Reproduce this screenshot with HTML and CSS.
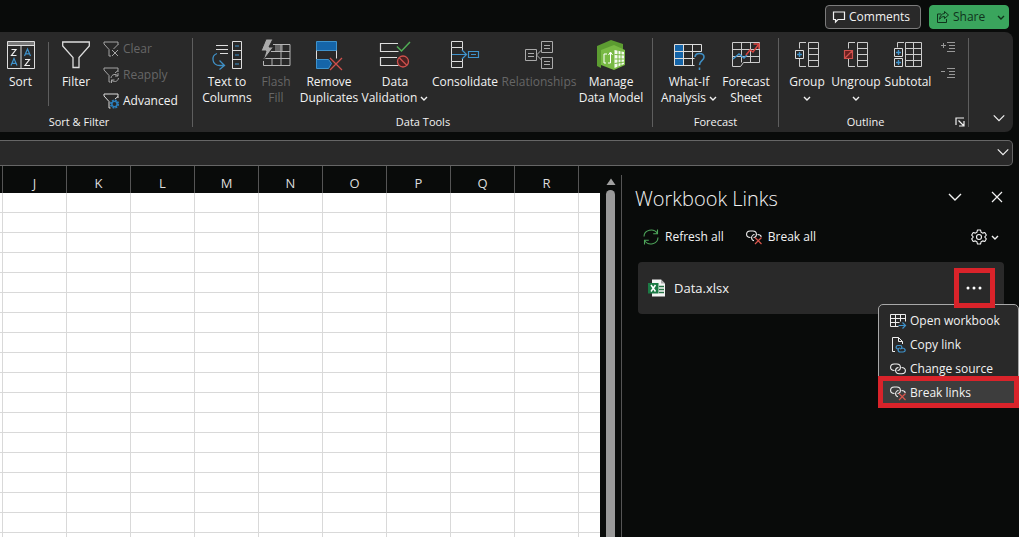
FILE: index.html
```html
<!DOCTYPE html>
<html lang="en">
<head>
<meta charset="utf-8">
<title>Workbook Links</title>
<link rel="stylesheet" href="styles.css">
</head>
<body>
<svg class="defs" aria-hidden="true">
  <symbol id="chev" viewBox="0 0 8 8"><path d="M1 3l3 3 3-3" fill="none" stroke="currentColor" stroke-width="1.4"/></symbol>
  <symbol id="chev-lg" viewBox="0 0 16 16"><path d="M2 5l6 6 6-6" fill="none" stroke="currentColor" stroke-width="1.4"/></symbol>
  <symbol id="chain" viewBox="0 0 16 16"><g fill="none" stroke="currentColor" stroke-width="1.100"><path d="M4.500 9.500C2 9.500.6 8.300.6 6.300S2.200 3 4.200 3h2.600c2.200 0 3.600 1.400 3.600 3.300S9 9.500 7.500 9.500"/><path d="M11.500 6.500c2.500 0 3.900 1.200 3.900 3.100s-1.500 3.200-3.600 3.200H9.200c-2.200 0-3.600-1.300-3.600-3.200S7 6.500 8.500 6.500"/></g></symbol>
  <symbol id="chain-x" viewBox="0 0 16 16"><g fill="none" stroke="currentColor" stroke-width="1.100"><path d="M4.500 8.500C2 8.500.6 7.300.6 5.300S2.200 2 4.200 2h2.600c2.200 0 3.600 1.400 3.600 3.300S9 8.500 7.500 8.500"/><path d="M11.500 5.500c2.200 0 3.500 1 3.800 2.300M8 11.700c-1.500-.3-2.400-1.500-2.400-3S7 5.500 8.500 5.500"/></g><path d="M9 8.500l6.500 6.500M15.500 8.500L9 15" stroke="#d8564c" stroke-width="1.200"/></symbol>
</svg>

<header class="titlebar">
  <button class="btn"><svg class="i14" viewBox="0 0 14 14"><path d="M1.500 2h11v7.500H6L3.500 12V9.500h-2z" fill="none" stroke="currentColor" stroke-width="1.200"/></svg>Comments</button>
  <button class="btn share"><svg class="i14" viewBox="0 0 14 14"><path d="M5 4H1.500v8.500h9V9M8.500 1.500l4 3.500-4 3.500V6.600C6 6.500 4.600 7.500 3.600 9.300 3.700 6 5.500 3.800 8.500 3.500z" fill="none" stroke="currentColor"/></svg>Share<svg class="i8 push"><use href="#chev"/></svg></button>
</header>

<nav class="ribbon" aria-label="Data ribbon">
  <section class="group first">
    <div class="tools">
      <button class="tool w40"><svg class="i28" viewBox="0 0 28 28"><path d="M.5.500h27v4H.5z" fill="#777"/><path d="M.5.500h27v27H.5zM.5 4.500h27M14 4.500v23" fill="none" stroke="#ddd"/><path d="M4.500 8.500h4.500l-4.500 6h5M18 18.500h4.500l-4.500 6h5" fill="none" stroke="#eee" stroke-width="1.200"/><path d="M4 24.500l3-7 3 7M5 22.300h4M17.500 15l3-7 3 7M18.500 12.800h4" fill="none" stroke="#3f93cc" stroke-width="1.200"/></svg><span>Sort</span></button>
      <i class="rule"></i>
      <button class="tool w54"><svg class="i28" viewBox="0 0 28 28"><path d="M.7 1h26.600v4L17 16.500v10h-6v-10L.7 5z" fill="none" stroke="#ddd" stroke-width="1.300"/></svg><span>Filter</span></button>
      <div class="stack filters">
        <button class="small off"><svg class="i16" viewBox="0 0 16 16"><path d="M15 4V1H1v2l5 5.500V15h2M15 3.500L10.500 8M9 9l6 6M15 9l-6 6" fill="none" stroke="#a5a5a5"/></svg>Clear</button>
        <button class="small off"><svg class="i16" viewBox="0 0 16 16"><path d="M15 5V1H1v2l5 5.500V15h1.500M15 3.500L12 6M8 11c.5-4 5-4.500 7-2M15 6v3h-3M15.500 11c-.5 4-5 4.500-7 2M8.500 16v-3h3" fill="none" stroke="#a5a5a5"/></svg>Reapply</button>
        <button class="small"><svg class="i16" viewBox="0 0 16 16"><path d="M15 5V1H1v2l5 5.500V15h1.500M15 3.500L12 6" fill="none" stroke="#ddd"/><circle cx="11.500" cy="11" r="3.600" fill="none" stroke="#2b7fbd" stroke-width="2" stroke-dasharray="1.900 .9"/><circle cx="11.500" cy="11" r="2.600" fill="none" stroke="#2b7fbd" stroke-width="1.400"/></svg>Advanced</button>
      </div>
    </div>
    <h2 class="caption shifted">Sort &amp; Filter</h2>
  </section>

  <section class="group data">
    <div class="tools">
      <button class="tool w54"><svg class="i30" viewBox="0 0 30 28"><path d="M4 4.500h12M4 8.500h12M8 12.500h8" stroke="#ddd" stroke-width="1.200"/><path d="M20.500.5h9v27h-9zM20.500 9.500h9M20.500 18.500h9" fill="none" stroke="#ddd"/><path d="M23 5h4M23 14h4M23 23h4" stroke="#3f93cc"/><path d="M5 12.500c-6 2-5.500 12 3 12h4M7.500 19.500l5 5-5 4" fill="none" stroke="#3f8fc4" stroke-width="1.300"/></svg><span>Text to<br>Columns</span></button>
      <button class="tool off w44"><svg class="i30" viewBox="0 0 30 28"><path d="M14 4h8v7h-8z" fill="#666"/><path d="M12 3.500h17v21H2.500V17M10 10.500h19M3 17.500h26M11 17.500v7M20 3.500v21" fill="none" stroke="#b5b5b5"/><path d="M5-2h7L8 6h4.500L2 20l3-10H0z" fill="#aaa" stroke="#292929"/></svg><span>Flash<br>Fill</span></button>
      <button class="tool w62"><svg class="i28" viewBox="0 0 28 28"><path d="M1.500.5h20v9h-20z" fill="#1565a9" stroke="#3f93cc"/><path d="M1.500 9.500v9M21.500 9.500v8" stroke="#ddd"/><path d="M1.500 18.500h12l3 4-3 5h-12z" fill="#1565a9" stroke="#3f93cc"/><path d="M15 17l12 12M27 17L15 29" stroke="#d0504c" stroke-width="1.300"/></svg><span>Remove<br>Duplicates</span></button>
      <button class="tool w70"><svg class="i30" viewBox="0 0 30 28"><path d="M18 2.500H.5v8h18M17 16.500H.5v8h18" fill="none" stroke="#ddd" stroke-width="1.200"/><path d="M17 5.500l4.500 4.500L30 1" fill="none" stroke="#50ad55" stroke-width="1.500"/><circle cx="23" cy="20.500" r="5.500" fill="#4a2021" stroke="#d0504c" stroke-width="1.300"/><path d="M19 16.500l8 8" stroke="#d0504c" stroke-width="1.300"/></svg><span>Data<br>Validation <svg class="i8"><use href="#chev"/></svg></span></button>
      <button class="tool w70"><svg class="i28" viewBox="0 0 28 28"><path d="M.5.500h11v6H.5zM.5 20.500h11v6H.5zM.5 6.500v14M11.500 6.500v3M11.500 17v3.500" fill="none" stroke="#ddd"/><path d="M1 13.500h14M11 9l4.500 4.500L11 18M17.500 10.500h10v6h-10zM20 13.500h5" fill="none" stroke="#3f93cc" stroke-width="1.200"/></svg><span>Consolidate</span></button>
      <button class="tool off w78"><svg class="i28" viewBox="0 0 28 28"><path d="M.5 8.500h11v11H.5zM16.500.5h11v11h-11zM16.500 16.500h11v11h-11zM3 12.500h6M3 15.500h6M19 4.500h6M19 7.500h6M19 20.500h6M19 23.500h6M16.500 9l-5 5 5 5" fill="none" stroke="#aaa"/></svg><span>Relationships</span></button>
      <button class="tool w66"><svg class="i30" viewBox="0 0 30 28"><path d="M1 5L15-1l12 4v6L15 6 5 10v17l-4-2z" fill="#5c9c31"/><path d="M5 9l13-5 11 5v15l-11 5-13-5z" fill="#78b944"/><path d="M18.500 9l9.500 2v12l-9.500 4z" fill="#f4faef"/><path d="M18.500 13.500l10 .5M18.500 18h10M18.500 22.500l10-1.500M22 9v17M25 10v15" stroke="#78b944"/><path d="M8 13h3M8 13v9h2M14.500 22V12M12.500 14l2-3 2 3M12 22h2.500" fill="none" stroke="#fff"/></svg><span>Manage<br>Data Model</span></button>
    </div>
    <h2 class="caption">Data Tools</h2>
  </section>

  <section class="group forecast">
    <div class="tools">
      <button class="tool w64"><svg class="i30" viewBox="0 0 30 28"><path d="M1 3h9v21H1z" fill="#1565a9"/><path d="M.5 3.500h27v7M.5 3.500v21h20M.5 10.500h27M.5 17.500h20M9.500 3.500v21M18.500 3.500v21" fill="none" stroke="#ddd"/><path d="M21 16c0-5 9-4.500 9 0 0 4-4.500 3.500-4.500 8M25.500 26.500v2.500" fill="none" stroke="#3f8fc4" stroke-width="1.600"/></svg><span>What-If<br>Analysis <svg class="i8"><use href="#chev"/></svg></span></button>
      <button class="tool w50"><svg class="i28" viewBox="0 0 28 28"><path d="M.5 1.500h27v20h-16l-3 4h-8zM.5 8.500h27M.5 15.500h27M9.500 1.500v20M18.500 1.500v20" fill="none" stroke="#ccc"/><path d="M1 18l6-5 5 4 3-3" fill="none" stroke="#3f93cc" stroke-width="1.600"/><path d="M14 14l4-5 3 2 6-8M21.500 3H27v5" fill="none" stroke="#d8423f" stroke-width="1.500"/></svg><span>Forecast<br>Sheet</span></button>
    </div>
    <h2 class="caption">Forecast</h2>
  </section>

  <section class="group outline">
    <div class="tools">
      <button class="tool w48"><svg class="i26" viewBox="0 0 26 28"><path d="M14.500 1.500h10v24h-10zM14.500 7.500h10M14.500 13.500h10M14.500 19.500h10M12 1.500H5.500v6M5.500 18v7.500H12" fill="none" stroke="#ccc"/><path d="M1.500 9.500h8v8h-8z" fill="none" stroke="#ddd"/><path d="M3 13.500h5M5.500 11v5" stroke="#3f93cc" stroke-width="1.400"/></svg><span>Group<br><svg class="i8"><use href="#chev"/></svg></span></button>
      <button class="tool w50"><svg class="i26" viewBox="0 0 26 28"><path d="M14.500 1.500h10v24h-10zM14.500 7.500h10M14.500 13.500h10M14.500 19.500h10M12 1.500H5.500v6M5.500 18v7.500H12" fill="none" stroke="#ccc"/><path d="M1.500 9.500h8v8h-8zM1.500 17.500l8-8" fill="#6b2020" stroke="#d0504c" stroke-width="1.200"/></svg><span>Ungroup<br><svg class="i8"><use href="#chev"/></svg></span></button>
      <button class="tool w54"><svg class="i28" viewBox="0 0 28 28"><path d="M11.500 1.500h16v24h-16zM11.500 7.500h16M11.500 13.500h16M11.500 19.500h16M19.500 1.500v24M10 1.500H3.500v5" fill="none" stroke="#ccc"/><path d="M.5 7.500h8v8h-8zM.5 17.500h8v8h-8z" fill="none" stroke="#ddd"/><path d="M2 11.500h5M4.500 9v5M2 21.500h5M4.500 19v5" stroke="#3f93cc" stroke-width="1.400"/></svg><span>Subtotal</span></button>
      <div class="stack icons">
        <button class="small" aria-label="Show detail"><svg class="i16" viewBox="0 0 16 16"><path d="M1 5.500h5M3.500 3v5M7 2.500h8M9 5.500h6M9 8.500h6M7 11.500h8" stroke="#999"/></svg></button>
        <button class="small" aria-label="Hide detail"><svg class="i16" viewBox="0 0 16 16"><path d="M1 5.500h4M7 2.500h8M9 5.500h6M9 8.500h6M7 11.500h8" stroke="#999"/></svg></button>
      </div>
    </div>
    <h2 class="caption">Outline</h2>
    <button class="launcher" aria-label="Outline settings"><svg class="i10" viewBox="0 0 10 10"><path d="M1 8V1h8M3.500 3.500l5 5M9 4v5H4" fill="none" stroke="currentColor" stroke-width="1.200"/></svg></button>
  </section>
  <button class="collapse" aria-label="Collapse ribbon"><svg class="i14"><use href="#chev-lg"/></svg></button>
</nav>

<div class="formula"><input aria-label="Formula bar"><button aria-label="Expand formula bar"><svg class="i14"><use href="#chev-lg"/></svg></button></div>

<main class="work">
  <div class="sheet">
    <table class="grid">
      <colgroup><col class="edge"><col span="9" class="col"><col></colgroup>
      <thead><tr><th></th><th>J</th><th>K</th><th>L</th><th>M</th><th>N</th><th>O</th><th>P</th><th>Q</th><th>R</th><th></th></tr></thead>
      <tbody id="cells"></tbody>
    </table>
  </div>
  <div class="scroll"><svg class="i10" viewBox="0 0 10 10"><path d="M5 1.500l4.500 6.500h-9z" fill="#a0a0a0"/></svg><i class="thumb"></i></div>
  <aside class="pane">
    <div class="head">
      <h1>Workbook Links</h1>
      <button aria-label="Pane options"><svg class="i16"><use href="#chev-lg"/></svg></button>
      <button aria-label="Close pane"><svg class="i12" viewBox="0 0 12 12"><path d="M1 1l10 10M11 1L1 11" stroke="currentColor" stroke-width="1.200"/></svg></button>
    </div>
    <div class="actions">
      <button><svg class="i16" viewBox="0 0 16 16"><path d="M1 7.500C1.200 1 10.500-1.500 14.500 4.500M14.500 .5v4.300h-4.300M15 8.500c-.2 6.500-9.500 9-13.500 3M1.500 15.500v-4.300h4.300" fill="none" stroke="#4ea65b" stroke-width="1.100"/></svg>Refresh all</button>
      <button><svg class="i16"><use href="#chain-x"/></svg>Break all</button>
      <button class="gear" aria-label="Settings"><svg class="i16" viewBox="0 0 16 16"><path d="M6.500 1h3l.6 2.200 1.500.9 2.200-.6 1.500 2.600L13.700 8l1.600 1.900-1.500 2.600-2.200-.6-1.500.9L9.500 15h-3l-.6-2.200-1.500-.9-2.200.6L.7 9.900 2.300 8 .7 6.100l1.500-2.600 2.200.6 1.500-.9z" fill="none" stroke="currentColor" stroke-linejoin="round" stroke-width="1.100"/><circle cx="8" cy="8" r="2.500" fill="none" stroke="currentColor" stroke-width="1.100"/></svg><svg class="i8"><use href="#chev"/></svg></button>
    </div>
    <div class="card">
      <svg class="i18" viewBox="0 0 18 18"><path d="M4 .5h9l4 4v13H4z" fill="#f4f4f4"/><path d="M13 .5v4h4z" fill="#aaa"/><path d="M11 7.500h5M11 10.500h5M11 13.500h5" stroke="#287346" stroke-width="1.300"/><path d="M0 4h10.500v10.500H0z" fill="#1c7a45"/><path d="M3 6l4.500 6.500M7.500 6L3 12.500" stroke="#fff" stroke-width="1.500"/></svg>
      <span>Data.xlsx</span>
      <button class="more marked" aria-label="More options"><svg class="i18" viewBox="0 0 18 18"><g fill="#fff"><circle cx="2" cy="9" r="1.500"/><circle cx="8" cy="9" r="1.500"/><circle cx="14" cy="9" r="1.500"/></g></svg></button>
      <div class="menu" role="menu">
        <button role="menuitem"><svg class="i16" viewBox="0 0 16 16"><path d="M.5 1.500h15v7M.5 1.500v12h8M.5 5.500h15M.5 9.500h9M5.500 1.500v12M10.500 1.500v7" fill="none" stroke="#eee"/><path d="M8.500 12.500h7M12.500 9.500l3 3-3 3" fill="none" stroke="#3f93cc" stroke-width="1.200"/></svg>Open workbook</button>
        <button role="menuitem"><svg class="i16" viewBox="0 0 16 16"><path d="M5 14.500H2.500V.5h6l4 4V7M8.500.5v4h4" fill="none" stroke="#eee"/><path d="M8 12c-2.500 0-2.500-3.500 0-3.500h2c2.500 0 2.500 3.500 0 3.500M12 11c4 0 4 4 1 4h-3c-2.500 0-2.500-4 0-4" fill="none" stroke="#3f93cc" stroke-width="1.200"/></svg>Copy link</button>
        <button role="menuitem"><svg class="i16"><use href="#chain"/></svg>Change source</button>
        <button role="menuitem" class="active marked"><svg class="i16"><use href="#chain-x"/></svg>Break links</button>
      </div>
    </div>
  </aside>
</main>
<script src="grid.js"></script>
</body>
</html>
```
FILE: styles.css
```css
* { box-sizing: border-box; }
html, body { height: 100%; }
body {
  margin: 0;
  display: flex;
  flex-direction: column;
  overflow: hidden;
  background: #090b0a;
  color: #f2f2f2;
  font: 12px/16px "Open Sans", "Noto Sans", sans-serif;
}
button {
  margin: 0;
  padding: 0;
  border: 0;
  background: none;
  color: inherit;
  font: inherit;
}
h1, h2 { margin: 0; font: inherit; }
svg { flex: none; overflow: visible; }
.defs { position: absolute; width: 0; height: 0; }
.i8 { width: 8px; height: 8px; }
.i10 { width: 10px; height: 10px; }
.i12 { width: 12px; height: 12px; }
.i14 { width: 14px; height: 14px; }
.i16 { width: 16px; height: 16px; }
.i18 { width: 18px; height: 18px; }
.i26 { width: 26px; height: 28px; }
.i28 { width: 28px; height: 28px; }
.i30 { width: 30px; height: 28px; }

.titlebar {
  display: flex;
  justify-content: flex-end;
  gap: 8px;
  padding: 5px 10px 3px 0;
}
.btn {
  display: flex;
  align-items: center;
  gap: 3px;
  width: 96px;
  height: 24px;
  padding: 0 5px 0 6px;
  border: 1px solid #7c7c7c;
  border-radius: 4px;
  background: #292929;
  font-size: 12px;
}
.share {
  width: 80px;
  padding-right: 3px;
  border-color: #3aa55d;
  background: #3aa55d;
  color: #10331c;
}
.push { margin-left: auto; }

.ribbon {
  display: flex;
  height: 100px;
  margin-right: 6px;
  padding: 6px 0 5px;
  border-radius: 0 8px 8px 0;
  background: #292929;
}
.group {
  position: relative;
  display: flex;
  flex-direction: column;
  justify-content: space-between;
  border-right: 1px solid #5e5e5e;
}
.first { width: 193px; }
.data { width: 460px; padding-left: 7px; }
.forecast { width: 126px; padding-left: 4px; }
.outline { width: 190px; padding-left: 4px; }
.tools { display: flex; }
.tool {
  display: flex;
  flex-direction: column;
  align-items: center;
  gap: 5px;
  padding-top: 3px;
  white-space: nowrap;
}
.off { color: #666; }
.w40 { width: 41px; }
.w44 { width: 44px; }
.w48 { width: 48px; }
.w50 { width: 50px; }
.w54 { width: 54px; }
.w62 { width: 62px; }
.w64 { width: 64px; }
.w66 { width: 66px; }
.w70 { width: 70px; }
.w78 { width: 78px; }
.rule { width: 1px; height: 64px; margin: 4px 0 0 7px; background: #5e5e5e; }
.stack { display: flex; flex-direction: column; gap: 10px; padding-top: 2px; }
.filters { padding-top: 3px; }
.small { display: flex; align-items: center; gap: 4px; height: 16px; }
.icons { padding-left: 5px; }
.caption { text-align: center; font-size: 11px; line-height: 10px; }
.shifted { padding-right: 34px; }
.data .caption { padding-right: 6px; }
.forecast .caption { padding-right: 4px; }
.outline .caption { padding-right: 20px; }
.launcher { position: absolute; right: 3px; bottom: 0; display: flex; }
.collapse { display: flex; align-items: flex-end; margin-left: auto; padding: 0 7px 2px; }

.formula {
  display: flex;
  align-items: center;
  height: 26px;
  margin: 8px 6px 0 0;
  border: 1px solid #666;
  border-left: 0;
  border-radius: 0 5px 5px 0;
  background: #292929;
}
.formula input { flex: 1; height: 20px; border: 0; background: none; color: inherit; }
.formula button { display: flex; padding: 0 2px 2px; }

.work { flex: 1; display: flex; min-height: 0; }
.sheet { flex: 1; min-width: 0; overflow: hidden; }
.grid { width: 100%; border-collapse: separate; border-spacing: 0; table-layout: fixed; }
.edge { width: 3px; }
.col { width: 64px; }
.grid th {
  height: 27px;
  padding: 6px 0 0;
  border-right: 1px solid #555;
  background: linear-gradient(#090b0a 6px, transparent 6px);
  font-size: 13px;
  font-weight: 400;
  color: #ddd;
}
.grid th, .grid td { line-height: 18px; }
.grid td { height: 20px; padding: 0; border-right: 1px solid #d9d9d9; border-bottom: 1px solid #d9d9d9; background: #fff; }
.grid th:last-child, .grid td:last-child { border-right: 0; }
.scroll {
  display: flex;
  flex-direction: column;
  align-items: center;
  gap: 3px;
  width: 21px;
  padding-top: 11px;
}
.thumb { flex: 1; width: 9px; border-radius: 5px 5px 0 0; background: #999; }

.pane { width: 398px; margin-top: 9px; padding: 9px 15px 0 13px; border-left: 1px solid #555; }
.head { display: flex; align-items: center; gap: 28px; height: 30px; padding-right: 1px; }
.head h1 { margin-right: auto; font-size: 20px; line-height: 30px; font-weight: 300; }
.head button { display: flex; padding-bottom: 5px; }
.actions { display: flex; gap: 22px; padding: 14px 5px 0 8px; }
.actions button { display: flex; align-items: center; gap: 6px; height: 18px; }
.actions .gear { gap: 4px; margin-left: auto; }
.card {
  position: relative;
  display: flex;
  align-items: center;
  gap: 8px;
  height: 52px;
  margin: 16px 0 0 3px;
  padding: 0 9px 0 10px;
  border-radius: 4px;
  background: #292929;
  font-size: 13px;
}
.marked { border: 5px solid #d9232a; }
.more { position: relative; z-index: 2; display: grid; place-items: center; width: 41px; height: 40px; margin-left: auto; }
.menu {
  position: absolute;
  top: 42px;
  right: -15px;
  display: flex;
  flex-direction: column;
  width: 141px;
  padding-top: 4px;
  border: 1px solid #a8a8a8;
  border-radius: 5px 5px 0 0;
  background: #292929;
  font-size: 12px;
}
.menu button { display: flex; align-items: center; gap: 4px; height: 24px; padding-left: 11px; white-space: nowrap; }
.menu .active { height: 32px; margin: -5px -1px -1px; padding: 1px 0 0 7px; background: #3d3d3d; }
```
FILE: grid.js
```js
const body = document.getElementById("cells");
for (let r = 0; r < 40; r++) {
  const row = body.insertRow();
  for (let c = 0; c < 11; c++) row.insertCell();
}
```
